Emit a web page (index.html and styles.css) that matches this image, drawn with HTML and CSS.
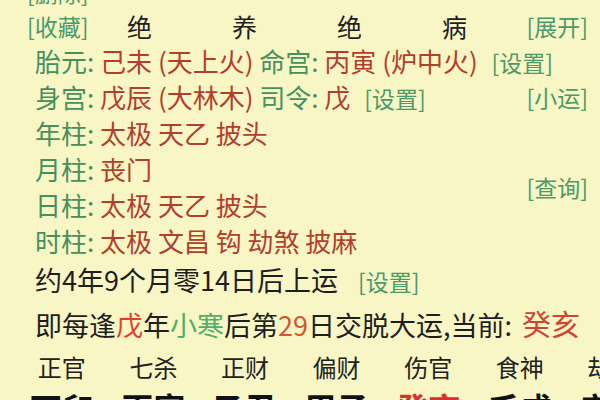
FILE: index.html
```html
<!DOCTYPE html>
<html lang="zh-CN">
<head>
<meta charset="utf-8">
<title>排盘</title>
<link rel="stylesheet" href="styles.css">
</head>
<body>
<div class="sheet">
  <div class="cut-row"><span class="tag">[删除]</span></div>
  <div class="header">
    <span class="tag">[收藏]</span>
    <span class="cell">绝</span>
    <span class="cell">养</span>
    <span class="cell">绝</span>
    <span class="cell">病</span>
    <span class="tag end">[展开]</span>
  </div>
  <div class="info">
    <div class="row r1"><span class="lbl">胎元:</span> <span class="val">己未 (天上火)</span> <span class="lbl">命宫:</span> <span class="val">丙寅 (炉中火)</span> <span class="tag gap">[设置]</span></div>
    <div class="row r2"><span class="lbl">身宫:</span> <span class="val">戊辰 (大林木)</span> <span class="lbl">司令:</span> <span class="val">戊</span> <span class="tag gap">[设置]</span></div>
    <div class="row r3"><span class="lbl">年柱:</span> <span class="val">太极 天乙 披头</span></div>
    <div class="row r4"><span class="lbl">月柱:</span> <span class="val">丧门</span></div>
    <div class="row r5"><span class="lbl">日柱:</span> <span class="val">太极 天乙 披头</span></div>
    <div class="row r6"><span class="lbl">时柱:</span> <span class="val">太极 文昌 钩 劫煞 披麻</span></div>
    <span class="tag side s2">[小运]</span>
    <span class="tag side s45">[查询]</span>
  </div>
  <div class="line start">约4年9个月零14日后上运 <span class="tag gap-wide">[设置]</span></div>
  <div class="line jiao">即每逢<span class="hot">戊</span>年<span class="fresh">小寒</span>后第<span class="num">29</span>日交脱大运,当前: <span class="now">癸亥</span></div>
  <div class="gods">
    <span>正官</span><span>七杀</span><span>正财</span><span>偏财</span><span>伤官</span><span>食神</span><span>劫财</span>
  </div>
  <div class="pillars">
    <span>丁卯</span><span>丙寅</span><span>乙丑</span><span>甲子</span><span class="cur">癸亥</span><span>壬戌</span><span>辛酉</span>
  </div>
</div>
</body>
</html>
```

FILE: styles.css
```css
html, body {
  margin: 0;
  padding: 0;
  background: #f9f6c6;
  overflow: hidden;
}
body {
  width: 600px;
  height: 400px;
  font-family: "Noto Sans CJK SC", "Noto Sans", sans-serif;
  color: #222;
}
.sheet {
  display: flex;
  flex-direction: column;
}
.tag {
  color: #4c9a69;
  font-size: 23px;
  white-space: nowrap;
}
.gap { margin-left: 8px; }
.gap-wide { margin-left: 14px; }
.cut-row {
  height: 10px;
  overflow: hidden;
  display: flex;
  align-items: flex-end;
  padding-left: 27px;
  line-height: 36px;
}
.header {
  height: 33px;
  display: grid;
  grid-template-columns: 60px repeat(4, 105px) 1fr;
  align-items: center;
  padding-left: 27px;
  padding-right: 12px;
  line-height: 33px;
}
.header .cell {
  text-align: center;
  font-size: 25px;
  color: #1e1e1e;
}
.header .end {
  justify-self: end;
}
.info {
  display: grid;
  grid-template-columns: minmax(0, 1fr) auto;
  grid-template-rows: repeat(6, 36px);
  padding-left: 35px;
  padding-right: 12px;
}
.row {
  grid-column: 1;
  font-size: 26px;
  line-height: 36px;
  white-space: nowrap;
}
.r1 { grid-row: 1; }
.r2 { grid-row: 2; }
.r3 { grid-row: 3; }
.r4 { grid-row: 4; }
.r5 { grid-row: 5; }
.r6 { grid-row: 6; }
.lbl { color: #45915e; }
.val { color: #b23e2c; }
.side {
  grid-column: 2;
  align-self: center;
  line-height: 30px;
}
.s2 { grid-row: 2; }
.s45 { grid-row: 4 / span 2; }
.line {
  padding-left: 35px;
  font-size: 27px;
  line-height: 42px;
  white-space: nowrap;
  color: #1e1e1e;
}
.hot { color: #e2402c; }
.fresh { color: #4fae6c; }
.num { color: #d5552f; }
.now {
  color: #cf4432;
  font-size: 29px;
  margin-left: 4px;
}
.gods, .pillars {
  display: grid;
  grid-template-columns: repeat(7, 91.6px);
  padding-left: 16px;
  white-space: nowrap;
}
.gods {
  margin-top: 1px;
  font-size: 24px;
  line-height: 40px;
  color: #222;
}
.gods span, .pillars span {
  text-align: center;
}
.pillars {
  font-size: 32px;
  font-weight: 700;
  line-height: 40px;
  color: #111;
}
.pillars .cur { color: #d7332a; }
```
